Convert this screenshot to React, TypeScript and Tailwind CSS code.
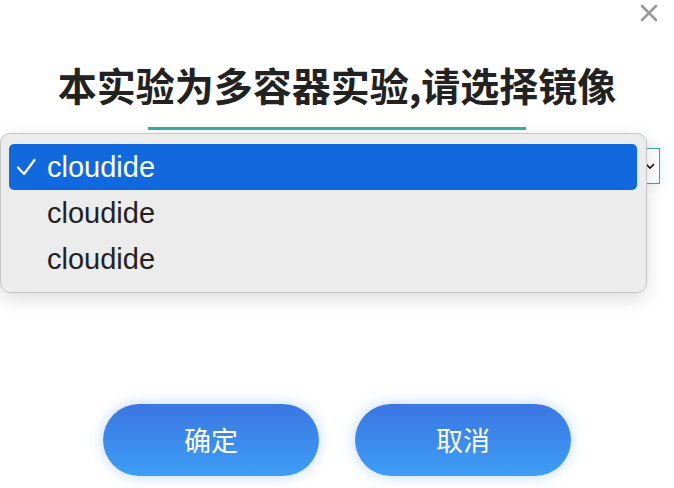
import React from "react";

const options = ["cloudide", "cloudide", "cloudide"];

function CloseIcon() {
  return (
    <svg width="18" height="18" viewBox="0 0 18 18" fill="none">
      <path d="M2 2 L16 16 M16 2 L2 16" stroke="#9a9a9a" strokeWidth="2.6" strokeLinecap="round" />
    </svg>
  );
}

function CheckIcon() {
  return (
    <svg width="22" height="18" viewBox="0 0 22 18" fill="none">
      <path d="M3 9.5 L9 16 L19.5 2" stroke="#ffffff" strokeWidth="2.2" strokeLinecap="round" strokeLinejoin="round" />
    </svg>
  );
}

export default function App() {
  return (
    <div
      className="relative w-[674px] h-[488px] bg-white overflow-hidden"
      style={{ fontFamily: '"Liberation Sans", "Noto Sans CJK SC", sans-serif' }}
    >
      <button className="absolute right-[16px] top-[4px] p-0">
        <CloseIcon />
      </button>

      <div className="flex flex-col items-center pt-[58px]">
        <h1
          className="text-[39px] leading-[52px] font-semibold text-[#222222]"
          style={{ fontFamily: '"Noto Sans CJK SC", sans-serif' }}
        >
          本实验为多容器实验,请选择镜像
        </h1>

        <div className="mt-[17px] w-[378px] h-[3px] bg-[#39aba6]" />

        {/* image select with its open option list */}
        <div className="relative mt-[18px] w-[646px] h-[36px] border border-[#3aaaa6] shadow-[0_0_14px_rgba(58,170,166,0.18)] bg-white">
          <svg className="absolute right-[4px] top-[12px]" width="10" height="10" viewBox="0 0 10 10" fill="none">
            <path d="M1 3 L5 7 L9 3" stroke="#111" strokeWidth="1.6" />
          </svg>

          <div className="absolute left-[-15px] top-[-16px] w-[647px] h-[160px] rounded-[10px] bg-[#ececec] border border-[#c6c6c6] shadow-[0_6px_18px_rgba(0,0,0,0.14)] pt-[10px] pl-[8px] pr-[9px]">
            {options.map((label, i) => (
              <div
                key={i}
                className={
                  i === 0
                    ? "flex items-center h-[46px] rounded-[5px] bg-[#1169dd] text-white"
                    : "flex items-center h-[46px] text-[#222222]"
                }
              >
                <span className="w-[38px] flex justify-start pl-[6px]">{i === 0 ? <CheckIcon /> : null}</span>
                <span className="text-[29px] leading-none">{label}</span>
              </div>
            ))}
          </div>
        </div>

        <div className="mt-[220px] flex gap-[36px]">
          {["确定", "取消"].map((t) => (
            <button
              key={t}
              className="w-[216px] h-[72px] rounded-full bg-gradient-to-b from-[#3b76e2] to-[#3e9ef6] text-white text-[27px] font-normal shadow-[0_0_14px_rgba(64,140,240,0.35)]"
              style={{ fontFamily: '"Noto Sans CJK SC", sans-serif' }}
            >
              {t}
            </button>
          ))}
        </div>
      </div>
    </div>
  );
}
